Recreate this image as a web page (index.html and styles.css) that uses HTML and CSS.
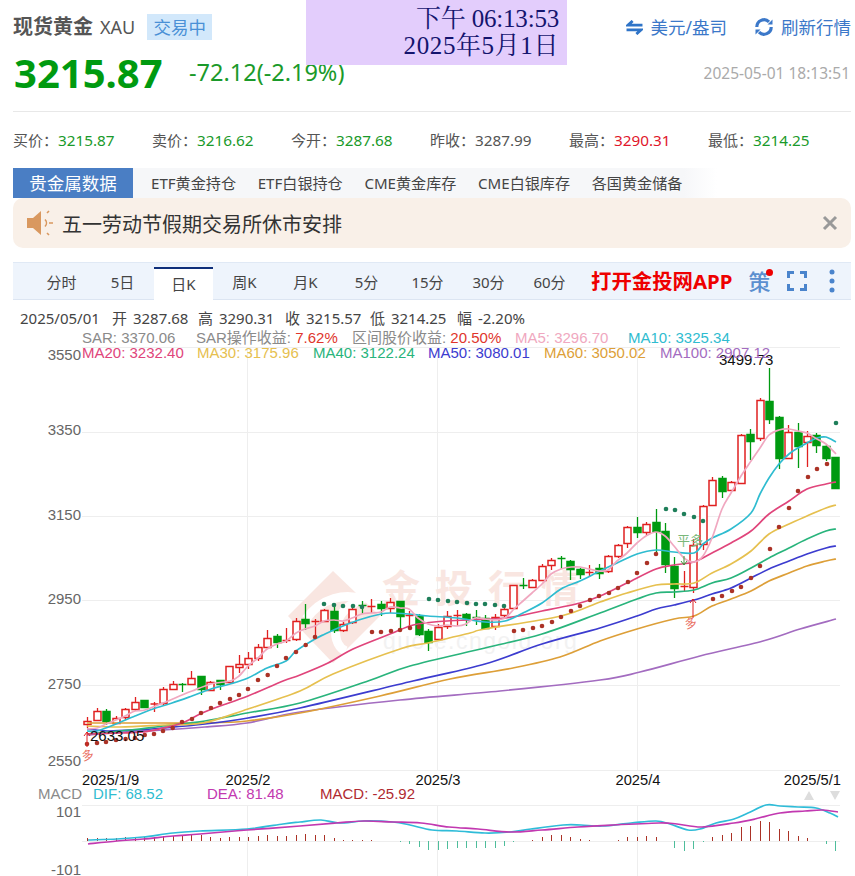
FILE: index.html
```html
<!DOCTYPE html>
<html lang="zh">
<head>
<meta charset="utf-8">
<title>现货黄金 XAU</title>
<link rel="stylesheet" href="styles.css">
</head>
<body>
<div class="clock"><div class="clock-time">下午 06:13:53</div><div class="clock-date">2025年5月1日</div></div>
<main class="page">
  <header class="header">
    <div class="row-title">
      <div class="title-group">
        <span class="name">现货黄金</span><span class="code">XAU</span><span class="badge">交易中</span>
      </div>
      <div class="actions">
        <span class="action">
          <svg class="ico-swap" viewBox="0 0 18 16"><path d="M7 1 2 5.500H17.500M11 15l5-4.500H.5"/></svg>美元/盎司
        </span>
        <span class="action">
          <svg class="ico-refresh" viewBox="0 0 20 20"><path d="M2.800 10a7.200 7.200 0 0 1 12.200-5.200"/><path d="M17.200 10a7.200 7.200 0 0 1-12.200 5.200"/><path class="solid" d="M13.500 7.500h5v-5zM6.500 12.500h-5v5z"/></svg>刷新行情
        </span>
      </div>
    </div>
    <div class="row-price">
      <span class="price">3215.87</span>
      <span class="delta">-72.12(-2.19%)</span>
      <span class="stamp">2025-05-01 18:13:51</span>
    </div>
  </header>

  <section class="stats">
    <div class="stat">买价：<b class="up">3215.87</b></div>
    <div class="stat">卖价：<b class="up">3216.62</b></div>
    <div class="stat">今开：<b class="up">3287.68</b></div>
    <div class="stat">昨收：<b>3287.99</b></div>
    <div class="stat">最高：<b class="hi">3290.31</b></div>
    <div class="stat">最低：<b class="up">3214.25</b></div>
  </section>

  <nav class="subnav">
    <span class="subnav-head">贵金属数据</span>
    <div class="subnav-links">
      <a>ETF黄金持仓</a><a>ETF白银持仓</a><a>CME黄金库存</a><a>CME白银库存</a><a>各国黄金储备</a>
    </div>
  </nav>

  <aside class="notice">
    <svg class="ico-speaker" viewBox="0 0 28 26"><path class="solid" d="M1 8h6l8-7v24l-8-7H1z"/><path class="ray" d="M19 9.500a5 5 0 0 1 0 7M21 3l2-2M23 13h4M21 23l2 2"/></svg>
    <span class="notice-text">五一劳动节假期交易所休市安排</span>
    <svg class="ico-close" viewBox="0 0 16 16"><path d="M2 2l12 12M14 2 2 14"/></svg>
  </aside>

  <nav class="chart-tabs">
    <a class="tab">分时</a><a class="tab">5日</a><a class="tab active">日K</a><a class="tab">周K</a><a class="tab">月K</a><a class="tab">5分</a><a class="tab">15分</a><a class="tab">30分</a><a class="tab">60分</a>
    <span class="promo">打开金投网APP</span>
    <span class="ce">策<i class="ce-dot"></i></span>
    <svg class="ico-full" viewBox="0 0 20 20"><path d="M1.500 7V1.500H7M13 1.500h5.500V7M18.500 13v5.500H13M7 18.500H1.500V13"/></svg>
    <svg class="ico-more" viewBox="0 0 6 24"><circle cx="3" cy="3" r="2.500"/><circle cx="3" cy="12" r="2.500"/><circle cx="3" cy="21" r="2.500"/></svg>
  </nav>

  <svg class="chart" viewBox="13 299 842 577" width="842" height="577">
    <text class="quote" y="323"><tspan x="20">2025/05/01</tspan><tspan x="112">开 3287.68</tspan><tspan x="198">高 3290.31</tspan><tspan x="285">收 3215.57</tspan><tspan x="370">低 3214.25</tspan><tspan x="457">幅 -2.20%</tspan></text>

    <g class="grid">
      <path d="M82 346.500H840M82 431.500H840M82 515.500H840M82 599.500H840M82 684.500H840M82 769.500H840M82 804.500H840M82 840.500H840"/>
      <path d="M247.500 346V769M437.500 346V769M637.500 346V769M247.500 804V876M437.500 804V876M637.500 804V876"/>
    </g>

    <g class="watermark">
      <path class="wm-mark" d="M333 570 380 615 333 662 288 615Z"/>
      <path class="wm-cut" d="M306 618C322 596 346 592 362 598 348 604 338 612 336 626 334 640 340 648 346 650"/>
      <text class="wm-cn" x="382" y="601">金投行情</text>
      <text class="wm-en" x="383" y="648">quote.cngold.org</text>
    </g>

    <g id="candles"></g>
    <g id="lines"></g>
    <g id="sar"></g>

    <text class="peak" x="719" y="364">3499.73</text>
    <text class="low" x="90" y="740">2633.05</text>

    <g class="signals">
      <path class="sig-up" d="M87 746V731M84 735l3-4 3 4"/>
      <text class="sig-text" transform="translate(83 760) rotate(-15)">多</text>
      <path class="sig-up" d="M693 617V598M690 602l3-4 3 4"/>
      <text class="sig-text" transform="translate(686 628) rotate(-15)">多</text>
      <text class="sig-close" x="677" y="544">平多</text>
      <path class="sig-down" d="M684 555V564M681 560l3 4 3-4"/>
    </g>

    <g class="legend">
      <text y="342"><tspan class="c-grey" x="82">SAR: 3370.06</tspan><tspan class="c-grey" x="196">SAR操作收益: </tspan><tspan class="c-red">7.62%</tspan><tspan class="c-grey" x="352">区间股价收益: </tspan><tspan class="c-red">20.50%</tspan><tspan class="c-ma5" x="515">MA5: 3296.70</tspan><tspan class="c-ma10" x="628">MA10: 3325.34</tspan></text>
      <text y="357"><tspan class="c-ma20" x="82">MA20: 3232.40</tspan><tspan class="c-ma30" x="197">MA30: 3175.96</tspan><tspan class="c-ma40" x="313">MA40: 3122.24</tspan><tspan class="c-ma50" x="428">MA50: 3080.01</tspan><tspan class="c-ma60" x="544">MA60: 3050.02</tspan><tspan class="c-ma100" x="660">MA100: 2907.12</tspan></text>
      <text y="798"><tspan class="c-grey" x="38">MACD</tspan><tspan class="c-ma10" x="93">DIF: 68.52</tspan><tspan class="c-dea" x="207">DEA: 81.48</tspan><tspan class="c-macd" x="320">MACD: -25.92</tspan></text>
    </g>

    <g class="axis">
      <text x="81" y="359">3550</text>
      <text x="81" y="434">3350</text>
      <text x="81" y="519">3150</text>
      <text x="81" y="603">2950</text>
      <text x="81" y="688">2750</text>
      <text x="81" y="765">2550</text>
      <text x="81" y="816">101</text>
      <text x="81" y="874">-101</text>
    </g>

    <g class="dates">
      <text x="82" y="784">2025/1/9</text>
      <text class="mid" x="248" y="784">2025/2</text>
      <text class="mid" x="438" y="784">2025/3</text>
      <text class="mid" x="638" y="784">2025/4</text>
      <text class="end" x="841" y="784">2025/5/1</text>
    </g>

    <path class="nudge" d="M804 799l5-9 5 9ZM830 790l5 9 5-9Z"/>

    <g id="macd"></g>
  </svg>
</main>
<script src="chart.js"></script>
</body>
</html>
```
FILE: styles.css
```css
* { box-sizing: border-box; }
html, body { margin: 0; height: 876px; overflow: hidden; background: #fff; }
body { font-family: "Noto Sans", "Noto Sans CJK SC", sans-serif; color: #444; position: relative; }
.page { padding: 0 4px 0 13px; width: 855px; }

.clock {
  position: absolute; left: 306px; top: 0; width: 261px; height: 65px; padding: 5px 8px 0 0;
  background: #e3cdfc; color: #14146e; text-align: right; z-index: 2;
  font: 25px/27px "Liberation Serif", "Noto Serif CJK SC", "Noto Sans CJK SC", serif;
}
.clock-time { letter-spacing: -0.2px; }
.clock-date { letter-spacing: 0.6px; }

.header { height: 112px; border-bottom: 1px solid #e8e8e8; padding-top: 14px; }
.row-title { display: flex; justify-content: space-between; align-items: center; height: 26px; }
.title-group { display: flex; align-items: center; }
.name { font-size: 20px; font-weight: 700; color: #555; line-height: 26px; }
.code { font-size: 18px; color: #555; margin-left: 7px; }
.badge { margin-left: 12px; width: 65px; height: 26px; line-height: 26px; text-align: center; background: #d2e8fb; color: #4a90d6; font-size: 17.500px; }
.actions { display: flex; gap: 27px; }
.action { display: flex; align-items: center; gap: 7px; color: #3b78c9; font-size: 17.500px; line-height: 26px; }
.ico-swap { width: 17px; height: 15px; fill: none; stroke: #2f74c8; stroke-width: 3; }
.ico-refresh { width: 20px; height: 20px; fill: none; stroke: #3b78c9; stroke-width: 3.200; }
.ico-refresh .solid { fill: #3b78c9; stroke: none; }

.row-price { display: flex; align-items: center; height: 50px; margin-top: 8px; position: relative; }
.price { font-size: 40px; font-weight: 700; color: #009a10; line-height: 50px; width: 176px; padding-left: 1px; }
.delta { font-size: 23.500px; color: #1a9a2a; line-height: 30px; margin-top: -2px; }
.stamp { margin-left: auto; font-size: 15.500px; color: #aaa; margin-right: 1px; }

.stats { display: flex; height: 56px; align-items: center; padding-bottom: 2px; }
.stat { width: 139px; font-size: 15px; color: #555; white-space: nowrap; }
.stat b { font-weight: 400; color: #555; font-size: 15.300px; }
.stat b.up { color: #1a9a2a; }
.stat b.hi { color: #e0162b; }

.subnav { display: flex; height: 30px; background: linear-gradient(90deg, #f6f7f9 80%, #fff 84%); }
.subnav-head { width: 120px; background: #4a7ec4; color: #fff; text-align: center; font-size: 17.500px; line-height: 30px; }
.subnav-links { display: flex; padding-left: 18px; gap: 21.700px; font-size: 15.100px; line-height: 30px; color: #444; white-space: nowrap; }

.notice { height: 50px; display: flex; align-items: center; background: #f9f0e8; border-radius: 10px; padding: 0 13px; }
.ico-speaker { width: 28px; height: 26px; }
.ico-speaker .solid { fill: #d9985f; }
.ico-speaker .ray { fill: none; stroke: #d9985f; stroke-width: 1.600; }
.notice-text { margin-left: 8px; font-size: 20px; color: #333; }
.ico-close { width: 16px; height: 16px; margin-left: auto; fill: none; stroke: #999; stroke-width: 3; }

.chart-tabs { display: flex; align-items: center; height: 38px; margin-top: 14px; padding-left: 18px; background: #eef4fc; border-top: 1px solid #e0e9f5; border-bottom: 1px solid #dce5f2; }
.tab { width: 61px; height: 36px; line-height: 38px; text-align: center; font-size: 15px; color: #444; }
.tab.active { align-self: flex-end; width: 59px; margin: 0 1px -1px; height: 33px; line-height: 30px; background: #fff; border-top: 2px solid #0f2f7a; }
.promo { margin-left: 11px; font-size: 20.400px; font-weight: 700; color: #ee0000; line-height: 24px; white-space: nowrap; }
.ce { position: relative; margin-left: 16px; font-size: 22px; font-weight: 500; color: #5b8fcf; line-height: 24px; }
.ce-dot { position: absolute; right: -3px; top: 0; width: 7px; height: 7px; border-radius: 50%; background: #ee0000; }
.ico-full { width: 20px; height: 20px; margin-left: 17px; fill: none; stroke: #4a84cc; stroke-width: 3; }
.ico-more { width: 6px; height: 24px; margin-left: 22px; fill: #4a84cc; }

.chart { display: block; }
.chart text { font-family: "Liberation Sans", "Noto Sans CJK SC", sans-serif; }
.chart .quote { font-family: "Noto Sans", "Noto Sans CJK SC", sans-serif; font-size: 15px; fill: #444; word-spacing: 2px; }

.grid path { fill: none; stroke: #eeeeee; stroke-width: 1; }
.wm-mark { fill: #f9e6e1; }
.wm-cut { fill: none; stroke: #fff; stroke-width: 9; }
.chart .wm-cn { font-family: "Noto Sans CJK SC", sans-serif; font-size: 38px; font-weight: 700; letter-spacing: 15px; fill: #f9e6e1; }
.chart .wm-en { font-size: 23px; letter-spacing: 1.500px; fill: #f2f2f2; }

.legend text { font-size: 15px; }
.c-grey { fill: #8a8a8a; }
.c-red { fill: #e0352b; }
.c-ma5 { fill: #f0a8c0; }
.c-ma10 { fill: #2fbcd0; }
.c-ma20 { fill: #e0457b; }
.c-ma30 { fill: #e6c04f; }
.c-ma40 { fill: #29b47c; }
.c-ma50 { fill: #3c3ccf; }
.c-ma60 { fill: #dd9f38; }
.c-ma100 { fill: #a36cc0; }
.c-dea { fill: #c238b0; }
.c-macd { fill: #b02a30; }

.axis text { font-size: 15px; fill: #666; text-anchor: end; }
.dates text { font-size: 14.700px; fill: #111; }
.dates .mid { text-anchor: middle; }
.dates .end { text-anchor: end; }
.peak, .low { font-size: 15px; fill: #111; }
.nudge { fill: #dddddd; }

.wick { stroke-width: 1.300; }
.body-line { stroke-width: 1.500; }
.red { stroke: #e02020; fill: #fff; }
.green { stroke: #009a10; fill: #009a10; }
.ma { fill: none; stroke-width: 1.700; stroke-linejoin: round; }
.dot-r { fill: #ab3226; }
.dot-g { fill: #1f7f5a; }
.bar-r { stroke: #ab3226; stroke-width: 1; }
.bar-g { stroke: #4ebd9b; stroke-width: 1; }

.sig-up { fill: none; stroke: #e02020; stroke-width: 1; }
.sig-down { fill: none; stroke: #3c9a3c; stroke-width: 1; }
.chart .sig-text { font-size: 12px; fill: #e86a5a; }
.chart .sig-close { font-size: 13px; fill: #7ab87a; }
```
FILE: chart.js
```js
(function () {
  var NS = 'http://www.w3.org/2000/svg';
  function el(parent, tag, attrs) {
    var node = document.createElementNS(NS, tag);
    for (var k in attrs) node.setAttribute(k, attrs[k]);
    parent.appendChild(node);
    return node;
  }
  function xAt(i) { return 87.3 + 9.47 * i; }

  // colour, high, body top, body bottom, low (pixel rows)
  var candles = [
    'r716,720,723,727','r707,710,719,720','g708,710,720,724','r715,717,722,723','r707,708,716,719',
    'r696,701,708,710','g699,699,706,706','r701,702.5,704,711','r686,688,702,704','r680,683,688,689',
    'g682,683,684,691','r670,677,683,684','g675,675,688,694','r680,681,689,690','g679,679,683,689',
    'r665,665,681,682','r654,663,666,672','r651,657,663,668','r643,646,657,660','r629,637,646,648',
    'g633,635,641,647','r627,639,641,642','r617,620,638,640','g603,618,622,629','r618,620,622,638',
    'r608,609,620,621','g603,610,629,632','r621,623,629,631','r605,608,621,623','g600,604,606,613',
    'r598,605,606.5,612','g600,603,607,615','r597,601,607,612','g600,600,615,627','r610,614,615,628',
    'g613,615,633,635','g628,630,641,650','r623,626,638,639','r610,615,625,628','r609,614,616,625',
    'g612,613,617,625','g609,616,617,624','g614,617,627,628','r613,616,625,629','r603,608,614,616',
    'r584,584,607,607','g577,584,586,588','r578,579,586,587','r563,565,579,580','r557,559,564,569',
    'g555,557,559,568','g559,560,568,579','g567,568,573,578','r564,571,573,575','g563,567,572,578',
    'r554,555,570,572','r543,544,555,557','r525,526,542,547','g516,526,531,537','r521,523,531,535',
    'g508,521,530,552','g522,530,563,572','g556,565,587,597','r570,585,587,590','r538,544,586,592',
    'r504,505,543,549','r476,479,504,505','g475,477,490,497','r480,481,489,490','r433,434,482,483',
    'g428,433,440,459','r397,399,437,440','g367,400,418,423','g415,416,457,468','r424,431,457,458',
    'g422,431,445,467','r430,435,441,466','g432,434,444,452','g444,445,457,460','g456,456,487,488'
  ];

  var lineData = {
    '#f0a8c0': [87,728,97,727,106,723,116,719,125,715,135,710,145,709,163,702,182,694,192,690,211,683,230,680,239,675,248,665,258,657,267,648,277,643,286,640,296,632,305,628,315,625,324,620,334,619,343,620,352,617,362,613,371,612,381,611,390,606,400,607,409,608,418,617,428,623,438,625,447,624,457,625,466,623,475,617,485,618,495,619,505,617,514,608,523,600,532,592,542,583,551,573,561,568,571,566,580,566,589,568,599,570,608,569,617,560,627,552,637,542,646,535,656,531,665,535,674,545,684,557,694,561,703,555,712,537,722,508,731,492,741,475,751,460,760,447,769,434,779,429,789,428,798,430,807,432,817,438,826,443,836,453],
    '#2fbcd0': [87,730,97,730,116,723,135,715,153,708,172,702,192,695,211,688,230,683,248,677,267,667,286,660,296,650,315,638,325,633,343,625,362,618,381,613,390,612,408,613,428,615,457,617,485,621,505,620,523,612,542,602,561,588,580,580,600,570,617,562,637,553,656,549,674,551,694,552,703,543,712,537,731,528,751,512,760,493,769,477,779,463,789,453,798,447,807,442,817,437,826,436,836,441],
    '#e0457b': [87,733,120,732,143,731,163,727,182,722,202,712,220,705,248,695,283,680,300,674,328,662,353,648,390,633,407,626,418,623,447,620,505,617,542,610,580,602,600,595,627,582,656,568,674,564,694,561,712,552,731,542,751,530,769,513,789,500,807,488,826,483,836,481],
    '#e6c04f': [87,725,120,726,163,724,203,722,248,708,300,690,333,673,403,647,428,642,470,632,485,628,561,615,600,601,627,592,656,584,674,583,694,582,712,572,731,563,751,550,769,533,789,523,807,515,826,507,836,504],
    '#29b47c': [87,733,130,729,163,725,205,720,247,712,300,702,368,680,410,665,485,647,542,633,600,612,637,598,656,592,674,591,694,589,712,582,731,577,751,567,769,557,789,547,807,538,826,530,836,528],
    '#3c3ccf': [87,728,107,730,135,729,163,727,205,723,248,717,300,707,413,680,485,663,542,643,600,627,637,615,656,608,674,604,694,599,712,593,731,587,751,577,769,568,789,560,807,553,826,547,836,545],
    '#dd9f38': [87,722,130,722,163,722,205,722,247,720,300,712,380,695,450,678,513,667,560,656,600,640,637,628,674,618,694,615,712,605,731,598,751,590,769,580,789,572,807,565,826,560,836,558],
    '#a36cc0': [87,734,125,731,163,729,205,726,247,722,300,711,400,699,500,690,600,679,640,671,700,655,763,640,800,628,836,618]
  };

  var sarRed = [87,743,97,742,106,741,116,739,125.6,738,135,737,144.7,734,154,733,163,730,172.7,727,182,721,192,718,201,712,211,707,220,702,230,698,239,694,248,688,258,679,267.7,674,277,665,286,657,296,651,305.7,644,315,636,372,631,381,631,391,630,400,629,410,627,419,626,514,630,523,629,533,627,542,625,552,621,561,616,571,610,580,605,590,599,599,595,609,592,618,587,628,581,637,572,647,562,656,553,713,598,722,595,732,590,741,586,751,577,760,565,770,548,779,526,789,507,798,490,808,476,817,468,827,463];
  var sarGreen = [324,603,334,604,343,605,353,605,362,606,429,598,438,599,448,600,457,601,467,602,476,603,485,603,495,604,504,605,666,508,675,509,684,513,694,516,703,520,836,422];

  var dif = [88,839,117,838,143,836,173,832,200,830,247,828,283,823,300,821,321,819,339,822,364,820,393,821,410,824,432,829,457,830,485,832,510,831,531,828,563,824,581,824,602,825,631,822,656,820,670,823,688,829,700,828,716,822,734,818,748,812,766,804,780,805,798,806,816,807,830,812,838,816];
  var dea = [88,843,117,840,143,838,173,835,200,833,247,829,300,825,336,822,364,820,393,821,421,822,449,826,478,828,510,831,542,829,578,826,613,824,659,822,677,823,702,826,734,822,755,818,780,812,805,810,823,809,838,811];
  var bars = [3,3,3,3,4,4,4,4,5,5,5,6,6,4,3,4,4,4,5,6,5,5,6,7,6,6,3,1,1,1,1,0,0,-1,-3,-6,-9,-9,-8,-7,-7,-7,-7,-7,-5,-1,0,1,4,6,6,4,2,1,0,0,1,4,4,5,4,0,-7,-10,-8,-1,4,6,8,14,15,20,19,12,10,5,3,0,-3,-10];

  function smooth(p) {
    var d = 'M' + p[0] + ' ' + p[1];
    for (var i = 0; i < p.length - 2; i += 2) {
      var x0 = p[Math.max(i - 2, 0)], y0 = p[Math.max(i - 1, 1)];
      var x1 = p[i], y1 = p[i + 1], x2 = p[i + 2], y2 = p[i + 3];
      var x3 = p[Math.min(i + 4, p.length - 2)], y3 = p[Math.min(i + 5, p.length - 1)];
      d += 'C' + (x1 + (x2 - x0) / 6).toFixed(1) + ' ' + (y1 + (y2 - y0) / 6).toFixed(1) + ' ' +
        (x2 - (x3 - x1) / 6).toFixed(1) + ' ' + (y2 - (y3 - y1) / 6).toFixed(1) + ' ' + x2 + ' ' + y2;
    }
    return d;
  }

  var cg = document.getElementById('candles');
  candles.forEach(function (c, i) {
    var cls = c[0] === 'r' ? 'red' : 'green';
    var v = c.slice(1).split(',').map(Number);
    var x = Math.round(xAt(i)) + 0.5;
    var g = el(cg, 'g', { 'class': cls });
    el(g, 'path', { 'class': 'wick', d: 'M' + x + ' ' + v[0] + 'V' + v[3] });
    if (v[2] - v[1] < 3) {
      el(g, 'path', { 'class': 'body-line', d: 'M' + (x - 4) + ' ' + (v[1] + 0.5) + 'H' + (x + 4) });
    } else {
      el(g, 'rect', { 'class': 'body-line', x: x - 3.5, y: v[1] + 0.5, width: 7, height: v[2] - v[1] });
    }
  });

  var lg = document.getElementById('lines');
  Object.keys(lineData).reverse().forEach(function (color) {
    el(lg, 'path', { 'class': 'ma', d: smooth(lineData[color]), stroke: color });
  });

  var sg = document.getElementById('sar');
  function dots(list, cls) {
    for (var i = 0; i < list.length; i += 2) {
      el(sg, 'circle', { 'class': cls, cx: list[i], cy: list[i + 1], r: 2.3 });
    }
  }
  dots(sarRed, 'dot-r');
  dots(sarGreen, 'dot-g');

  var mg = document.getElementById('macd');
  bars.forEach(function (h, i) {
    if (!h) return;
    var x = Math.round(xAt(i)) + 0.5;
    el(mg, 'path', { 'class': h > 0 ? 'bar-r' : 'bar-g', d: 'M' + x + ' 840V' + (840 - h) });
  });
  el(mg, 'path', { 'class': 'ma', d: smooth(dif), stroke: '#2fbcd8' });
  el(mg, 'path', { 'class': 'ma', d: smooth(dea), stroke: '#c238b0' });
})();
```
